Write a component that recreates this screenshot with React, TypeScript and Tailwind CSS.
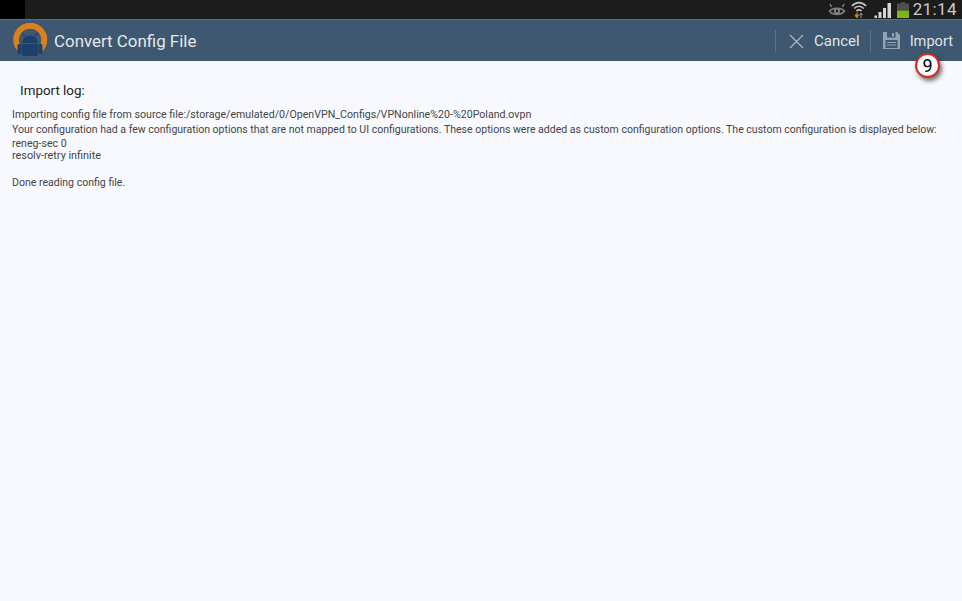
export default function App() {
  return (
    <div className="w-[962px] h-[601px] overflow-hidden flex flex-col bg-[#f8f9ff] font-['Roboto',sans-serif]">
      {/* status bar */}
      <div className="h-[19px] shrink-0 bg-[#1c1c1c] flex items-center justify-between">
        <div className="w-[25px] h-[19px] bg-black" />
        <div className="flex items-center h-[19px] pr-[5px]">
          <svg width="18" height="14" viewBox="0 0 18 14" className="mr-[5px]">
            <path d="M1.5 8 C4.5 4.5 13.5 4.5 16.5 8 C13.5 12.5 4.5 12.5 1.5 8Z" fill="none" stroke="#7f7f7f" strokeWidth="1.6" />
            <circle cx="9" cy="8" r="3.2" fill="#7f7f7f" />
            <circle cx="9" cy="8" r="1.2" fill="#1c1c1c" />
            <path d="M3.5 4 L2 1 M14.5 4 L16 1" stroke="#7f7f7f" strokeWidth="1.6" />
          </svg>
          <svg width="16" height="18" viewBox="0 0 16 18" className="mr-[7px]">
            <path d="M1 5 C5 0.5 11 0.5 15 5" fill="none" stroke="#c4c4c4" strokeWidth="1.7" />
            <path d="M3.2 7.5 C6 4.5 10 4.5 12.8 7.5" fill="none" stroke="#c4c4c4" strokeWidth="1.7" />
            <path d="M5.5 10 C7 8.6 9 8.6 10.5 10" fill="none" stroke="#c4c4c4" strokeWidth="1.7" />
            <path d="M4 14 H7.6 L5.8 17Z M6 11 V14" fill="#d08a22" stroke="#d08a22" strokeWidth="1" />
            <path d="M10 17 V12 M10 12 L8.4 14 M10 12 L11.6 14" fill="none" stroke="#7f7f7f" strokeWidth="1.2" />
          </svg>
          <svg width="18" height="16" viewBox="0 0 18 16" className="mr-[5px]">
            <path d="M0.5 16 H3 V13.5 H0.5Z M4.5 16 H7.5 V10 H4.5Z M9 16 H12 V6 H9Z M13.5 16 H17 V1 H13.5Z" fill="#d6d6d6" />
          </svg>
          <svg width="12" height="16" viewBox="0 0 12 16" className="mr-[4px]">
            <rect x="4" y="0" width="4" height="2" fill="#4f4f4f" />
            <rect x="0" y="1.5" width="12" height="7" fill="#4f4f4f" />
            <rect x="0" y="8.5" width="12" height="7.5" fill="#7fb61c" />
          </svg>
          <span className="text-[#c9c9c9] text-[17px] leading-[19px] tracking-[0.4px]">21:14</span>
        </div>
      </div>
      {/* action bar */}
      <div className="h-[42px] shrink-0 bg-[#3d5870] border-t border-t-[#587087] flex items-center relative">
        <svg width="36" height="36" viewBox="0 0 36 36" className="ml-[12px] mr-[6px] mt-[1px]">
          <path d="M5.5 28 A17 17 0 1 1 31 28 L26.5 24 A11 11 0 1 0 10 24Z" fill="#d9811f" />
          <circle cx="18" cy="17" r="11" fill="#3d5870" />
          <path d="M10 20 A8 7.5 0 0 1 26 20Z" fill="#1f3f6b" />
          <path d="M12.5 13 L10.5 10 M23.5 13 L25.5 10" stroke="#1f3f6b" strokeWidth="1.2" />
          <rect x="10" y="21" width="16" height="12" rx="1.5" fill="#1f3f6b" />
          <rect x="5.5" y="21" width="4" height="10" rx="1.5" fill="#1f3f6b" />
          <rect x="26.5" y="21" width="4" height="10" rx="1.5" fill="#1f3f6b" />
        </svg>
        <span className="text-[#e4e8ec] text-[16.9px] leading-none mt-[1px]">Convert Config File</span>
        <div className="ml-auto flex items-center h-full">
          <div className="w-px h-[22px] bg-[#5a7186]" />
          <svg width="15" height="15" viewBox="0 0 15 15" className="ml-[13px] mr-[10px] mt-[1px]">
            <path d="M1 1 L14 14 M14 1 L1 14" stroke="#aab6c0" strokeWidth="1.3" />
          </svg>
          <span className="text-[#dfe4e9] text-[15px] leading-none mr-[10px] mt-[1px]">Cancel</span>
          <div className="w-px h-[22px] bg-[#5a7186]" />
          <svg width="17" height="17" viewBox="0 0 17 17" className="ml-[12px] mr-[10px]">
            <path d="M0 0 H14 L17 3 V17 H0 Z" fill="#93a2af" />
            <rect x="4" y="0" width="8.5" height="5.5" fill="#3d5870" />
            <rect x="9" y="1" width="2" height="3.5" fill="#93a2af" />
            <rect x="2.5" y="8" width="12" height="8" fill="#3d5870" />
            <path d="M4 10.5 H13 M4 13 H13" stroke="#93a2af" strokeWidth="1.2" />
          </svg>
          <span className="text-[#dfe4e9] text-[14.6px] leading-none mr-[9px] mt-[1px]">Import</span>
        </div>
        <div className="absolute left-[915px] top-[33px] w-[25px] h-[25px] rounded-full bg-white border-[2.5px] border-[#e0261c] shadow-[2px_3px_4px_rgba(0,0,0,0.55)] flex items-center justify-center text-black text-[18px] leading-none z-10">9</div>
      </div>
      {/* content */}
      <div className="pt-[21px] pl-[12px]">
        <div className="pl-[8px] text-[#222] text-[13.4px] leading-[18px]">Import log:</div>
        <div className="mt-[8px] text-[#444] whitespace-pre">
          <div className="h-[14px] leading-[14px] text-[10.64px]">Importing config file from source file:/storage/emulated/0/OpenVPN_Configs/VPNonline%20-%20Poland.ovpn</div>
          <div className="h-[15px] leading-[15px] text-[10.52px]">Your configuration had a few configuration options that are not mapped to UI configurations. These options were added as custom configuration options. The custom configuration is displayed below:</div>
          <div className="h-[13px] leading-[14px] text-[10.6px]">reneg-sec 0</div>
          <div className="h-[13px] leading-[12px] text-[10.85px]">resolv-retry infinite</div>
          <div className="h-[14px]" />
          <div className="h-[13px] leading-[12px] text-[10.55px]">Done reading config file.</div>
        </div>
      </div>
    </div>
  );
}
